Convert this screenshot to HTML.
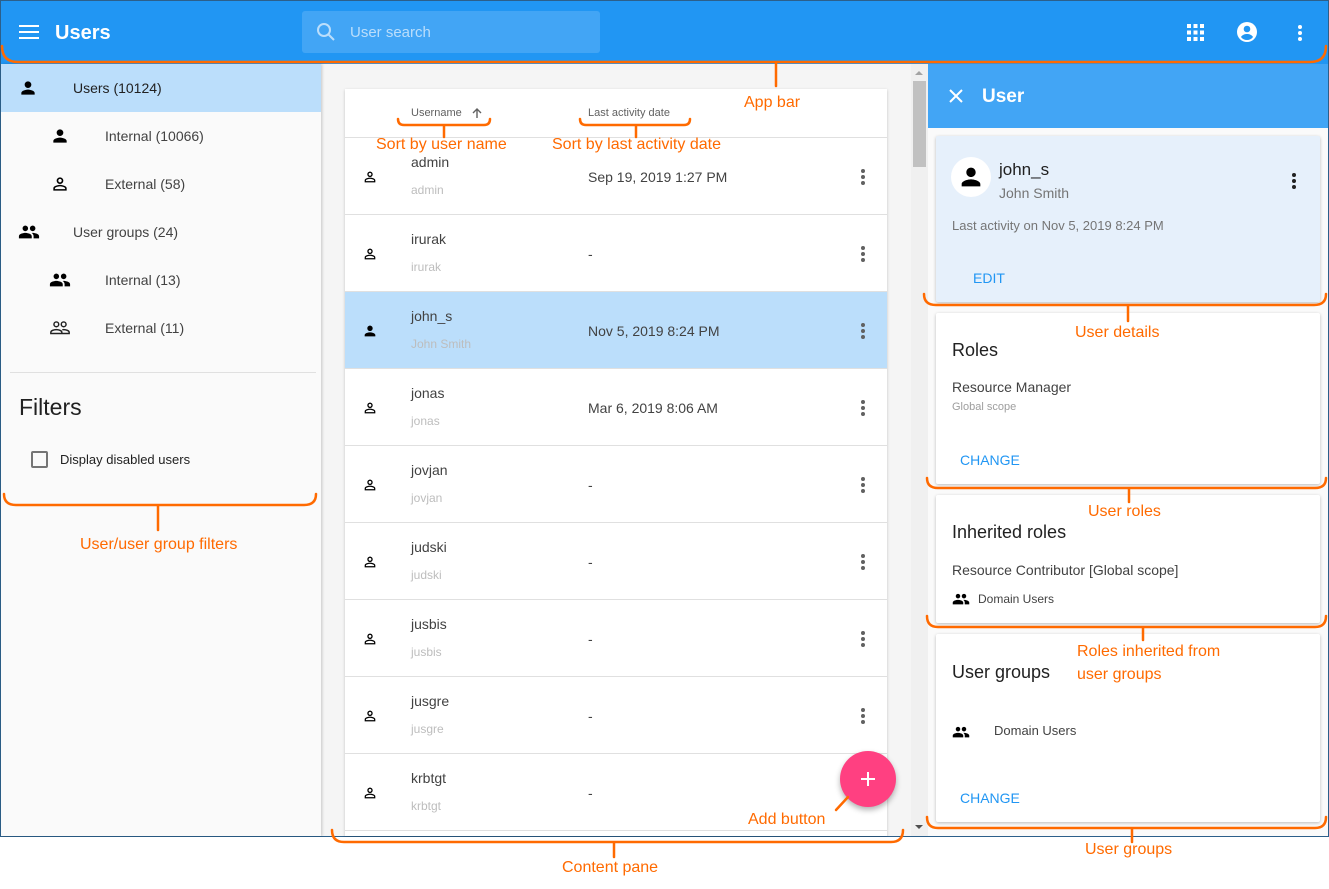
<!DOCTYPE html>
<html><head><meta charset="utf-8">
<style>
*{box-sizing:border-box;margin:0;padding:0}
body{width:1329px;height:889px;background:#fff;position:relative;overflow:hidden;font-family:"Liberation Sans",sans-serif;color:#212121}
.a{position:absolute}
.t{position:absolute;white-space:nowrap;line-height:1}
svg.i{position:absolute}
.ann{position:absolute;white-space:nowrap;color:#ff6a00;font-size:16px;line-height:1;font-family:"Liberation Sans",sans-serif}
.card{position:absolute;left:936px;width:384px;background:#fff;border-radius:2px;box-shadow:0 1px 3px rgba(0,0,0,.25)}
.btn{position:absolute;color:#2196f3;font-size:14px;line-height:1}
</style></head><body>
<!-- frame -->
<div class="a" style="left:0;top:0;width:1329px;height:837px;border:1px solid #2c5f8a;background:#f5f5f5"></div>
<!-- app bar -->
<div class="a" style="left:1px;top:1px;width:1327px;height:63px;background:#2196f3"></div>
<div class="a" style="left:19px;top:25px;width:20px;height:2px;background:#fff;box-shadow:0 6px 0 #fff,0 12px 0 #fff"></div>
<div class="t" style="left:55px;top:23px;color:#fff;font-size:20px;font-weight:bold">Users</div>
<div class="a" style="left:302px;top:11px;width:298px;height:42px;background:#42a5f5;border-radius:3px"></div>
<svg class="i" style="left:314px;top:20px" width="24" height="24" viewBox="0 0 24 24"><circle cx="10" cy="10" r="6" fill="none" stroke="#bbdefb" stroke-width="2"/><path d="M14.5 14.5L20 20" stroke="#bbdefb" stroke-width="2"/></svg>
<div class="t" style="left:350px;top:25px;color:#bbdefb;font-size:15px">User search</div>
<svg class="i" style="left:1187px;top:24px" width="17" height="17" viewBox="0 0 17 17" fill="#fff"><rect x="0" y="0" width="4" height="4"/><rect x="6.5" y="0" width="4" height="4"/><rect x="13" y="0" width="4" height="4"/><rect x="0" y="6.5" width="4" height="4"/><rect x="6.5" y="6.5" width="4" height="4"/><rect x="13" y="6.5" width="4" height="4"/><rect x="0" y="13" width="4" height="4"/><rect x="6.5" y="13" width="4" height="4"/><rect x="13" y="13" width="4" height="4"/></svg>
<svg class="i" style="left:1236px;top:21px" width="22" height="22" viewBox="0 0 22 22"><circle cx="11" cy="11" r="10" fill="#fff"/><circle cx="11" cy="8" r="3.3" fill="#2196f3"/><path d="M5 16c1.5-2.5 4-3 6-3s4.5.5 6 3c-1.5 2-3.5 3-6 3s-4.5-1-6-3z" fill="#2196f3"/></svg>
<div class="a" style="left:1298px;top:25px;width:4px;height:4px;border-radius:2px;background:#fff;box-shadow:0 6px 0 #fff,0 12px 0 #fff"></div>

<!-- left sidebar -->
<div class="a" style="left:1px;top:64px;width:320px;height:772px;background:#fafafa;box-shadow:1px 0 3px rgba(0,0,0,.2)"></div>
<div class="a" style="left:1px;top:64px;width:320px;height:48px;background:#bbdefb"></div>
<svg class="i" style="left:18px;top:78px" width="20" height="20" viewBox="0 0 24 24"><path d="M12 12c2.21 0 4-1.79 4-4s-1.79-4-4-4-4 1.79-4 4 1.79 4 4 4zm0 2c-2.67 0-8 1.34-8 4v2h16v-2c0-2.66-5.33-4-8-4z"/></svg>
<div class="t" style="left:73px;top:81px;font-size:14px">Users (10124)</div>
<svg class="i" style="left:50px;top:126px" width="20" height="20" viewBox="0 0 24 24"><path d="M12 12c2.21 0 4-1.79 4-4s-1.79-4-4-4-4 1.79-4 4 1.79 4 4 4zm0 2c-2.67 0-8 1.34-8 4v2h16v-2c0-2.66-5.33-4-8-4z"/></svg>
<div class="t" style="left:105px;top:129px;font-size:14px;color:#424242">Internal (10066)</div>
<svg class="i" style="left:50px;top:174px" width="20" height="20" viewBox="0 0 24 24"><path d="M12 5.9c1.16 0 2.1.94 2.1 2.1s-.94 2.1-2.1 2.1S9.9 9.16 9.9 8s.94-2.1 2.1-2.1m0 9c2.97 0 6.1 1.46 6.1 2.1v1.1H5.9V17c0-.64 3.13-2.1 6.1-2.1M12 4C9.79 4 8 5.79 8 8s1.79 4 4 4 4-1.79 4-4-1.79-4-4-4zm0 9c-2.67 0-8 1.34-8 4v3h16v-3c0-2.66-5.33-4-8-4z"/></svg>
<div class="t" style="left:105px;top:177px;font-size:14px;color:#424242">External (58)</div>
<svg class="i" style="left:17px;top:221px" width="24" height="22" viewBox="0 0 24 24"><path d="M16 11c1.66 0 2.99-1.34 2.99-3S17.66 5 16 5c-1.66 0-3 1.34-3 3s1.34 3 3 3zm-8 0c1.66 0 2.99-1.34 2.99-3S9.66 5 8 5C6.34 5 5 6.34 5 8s1.34 3 3 3zm0 2c-2.33 0-7 1.170-7 3.5V19h14v-2.5c0-2.330-4.67-3.5-7-3.5zm8 0c-.29 0-.62.02-.97.05 1.16.84 1.970 1.97 1.97 3.45V19h6v-2.5c0-2.33-4.67-3.5-7-3.5z"/></svg>
<div class="t" style="left:73px;top:225px;font-size:14px;color:#424242">User groups (24)</div>
<svg class="i" style="left:49px;top:269px" width="22" height="22" viewBox="0 0 24 24"><path d="M16 11c1.66 0 2.99-1.34 2.99-3S17.66 5 16 5c-1.66 0-3 1.34-3 3s1.34 3 3 3zm-8 0c1.66 0 2.99-1.34 2.99-3S9.660 5 8 5C6.34 5 5 6.34 5 8s1.34 3 3 3zm0 2c-2.33 0-7 1.17-7 3.5V19h14v-2.5c0-2.33-4.67-3.5-7-3.5zm8 0c-.29 0-.62.02-.97.05 1.16.84 1.97 1.97 1.97 3.45V19h6v-2.5c0-2.33-4.67-3.5-7-3.5z"/></svg>
<div class="t" style="left:105px;top:273px;font-size:14px;color:#424242">Internal (13)</div>
<svg class="i" style="left:49px;top:317px" width="22" height="22" viewBox="0 0 24 24" fill="none" stroke="#212121" stroke-width="1.6"><circle cx="8" cy="8" r="2.6"/><circle cx="16" cy="8" r="2.6"/><path d="M2 18v-1.3c0-1.8 3.5-2.9 6-2.9s6 1.1 6 2.9V18zM14.5 14c.5-.1 1-.2 1.5-.2 2.5 0 6 1.1 6 2.9V18h-8"/></svg>
<div class="t" style="left:105px;top:321px;font-size:14px;color:#424242">External (11)</div>
<div class="a" style="left:10px;top:372px;width:306px;height:1px;background:#e0e0e0"></div>
<div class="t" style="left:19px;top:396px;font-size:23px">Filters</div>
<div class="a" style="left:31px;top:451px;width:17px;height:17px;border:2px solid #757575;border-radius:2px"></div>
<div class="t" style="left:60px;top:453px;font-size:13px">Display disabled users</div>

<!-- scrollbar -->
<div class="a" style="left:911px;top:64px;width:17px;height:772px;background:#f0f0f0"></div>
<div class="a" style="left:913px;top:81px;width:13px;height:86px;background:#c1c1c1"></div>
<div class="a" style="left:915px;top:71px;width:0;height:0;border-left:4px solid transparent;border-right:4px solid transparent;border-bottom:4px solid #a3a3a3"></div>
<div class="a" style="left:915px;top:825px;width:0;height:0;border-left:4px solid transparent;border-right:4px solid transparent;border-top:4px solid #505050"></div>

<!-- table -->
<div class="a" style="left:345px;top:89px;width:542px;height:747px;background:#fff;box-shadow:0 1px 3px rgba(0,0,0,.2)"></div>
<div class="t" style="left:411px;top:108px;font-size:11px;color:#616161">Username</div>
<svg class="i" style="left:471px;top:107px" width="12" height="12" viewBox="0 0 12 12"><path d="M6 11V2M2 6l4-4 4 4" stroke="#616161" stroke-width="1.4" fill="none"/></svg>
<div class="t" style="left:588px;top:108px;font-size:11px;color:#616161">Last activity date</div>
<div class="a" style="left:345px;top:137px;width:542px;height:1px;background:#e0e0e0"></div>
<div id="rows"></div>

<!-- FAB -->
<div class="a" style="left:840px;top:751px;width:56px;height:56px;border-radius:28px;background:#ff4081;box-shadow:0 3px 6px rgba(0,0,0,.3)"></div>
<div class="a" style="left:861px;top:778px;width:14px;height:2px;background:#fff"></div>
<div class="a" style="left:867px;top:772px;width:2px;height:14px;background:#fff"></div>

<!-- right panel -->
<div class="a" style="left:928px;top:64px;width:400px;height:772px;background:#fafafa"></div>
<div class="a" style="left:928px;top:64px;width:400px;height:64px;background:#42a5f5"></div>
<svg class="i" style="left:948px;top:88px" width="16" height="16" viewBox="0 0 16 16"><path d="M2 2l12 12M14 2L2 14" stroke="#fff" stroke-width="2"/></svg>
<div class="t" style="left:982px;top:87px;color:#fff;font-size:19px;font-weight:bold">User</div>

<div class="card" style="top:136px;height:166px;background:#e6f0fb"></div>
<div class="a" style="left:951px;top:157px;width:40px;height:40px;border-radius:20px;background:#fff"></div>
<svg class="i" style="left:957px;top:163px" width="28" height="28" viewBox="0 0 24 24"><path d="M12 12c2.21 0 4-1.79 4-4s-1.79-4-4-4-4 1.790-4 4 1.79 4 4 4zm0 2c-2.67 0-8 1.34-8 4v2h16v-2c0-2.66-5.33-4-8-4z"/></svg>
<div class="t" style="left:999px;top:161px;font-size:17px">john_s</div>
<div class="t" style="left:999px;top:186px;font-size:14px;color:#757575">John Smith</div>
<div class="a" style="left:1292px;top:173px;width:4px;height:4px;border-radius:2px;background:#212121;box-shadow:0 6px 0 #212121,0 12px 0 #212121"></div>
<div class="t" style="left:952px;top:219px;font-size:13px;color:#757575">Last activity on Nov 5, 2019 8:24 PM</div>
<div class="btn" style="left:973px;top:271px">EDIT</div>

<div class="card" style="top:313px;height:171px"></div>
<div class="t" style="left:952px;top:341px;font-size:18px">Roles</div>
<div class="t" style="left:952px;top:380px;font-size:14px;color:#424242">Resource Manager</div>
<div class="t" style="left:952px;top:402px;font-size:11px;color:#9e9e9e">Global scope</div>
<div class="btn" style="left:960px;top:453px">CHANGE</div>

<div class="card" style="top:495px;height:128px"></div>
<div class="t" style="left:952px;top:523px;font-size:18px">Inherited roles</div>
<div class="t" style="left:952px;top:563px;font-size:14px;color:#424242">Resource Contributor [Global scope]</div>
<svg class="i" style="left:952px;top:590px" width="18" height="16" viewBox="0 0 24 21"><path d="M16 11c1.66 0 2.99-1.34 2.99-3S17.66 5 16 5c-1.66 0-3 1.34-3 3s1.34 3 3 3zm-8 0c1.66 0 2.99-1.34 2.99-3S9.66 5 8 5C6.34 5 5 6.34 5 8s1.34 3 3 3zm0 2c-2.33 0-7 1.17-7 3.5V19h14v-2.5c0-2.33-4.67-3.5-7-3.5zm8 0c-.29 0-.62.02-.97.05 1.16.84 1.97 1.97 1.97 3.45V19h6v-2.5c0-2.33-4.67-3.5-7-3.5z"/></svg>
<div class="t" style="left:978px;top:593px;font-size:12px;color:#424242">Domain Users</div>

<div class="card" style="top:634px;height:188px"></div>
<div class="t" style="left:952px;top:663px;font-size:18px">User groups</div>
<svg class="i" style="left:952px;top:723px" width="18" height="16" viewBox="0 0 24 21"><path d="M16 11c1.66 0 2.99-1.34 2.99-3S17.66 5 16 5c-1.66 0-3 1.34-3 3s1.34 3 3 3zm-8 0c1.66 0 2.99-1.34 2.99-3S9.66 5 8 5C6.34 5 5 6.34 5 8s1.34 3 3 3zm0 2c-2.33 0-7 1.17-7 3.5V19h14v-2.5c0-2.33-4.67-3.5-7-3.5zm8 0c-.29 0-.62.02-.97.05 1.16.84 1.97 1.97 1.97 3.45V19h6v-2.5c0-2.33-4.67-3.5-7-3.5z"/></svg>
<div class="t" style="left:994px;top:724px;font-size:13px;color:#424242">Domain Users</div>
<div class="btn" style="left:960px;top:791px">CHANGE</div>

<!-- bottom white below frame -->
<div class="a" style="left:0;top:837px;width:1329px;height:52px;background:#fff"></div>

<!-- annotations -->
<svg class="a" style="left:0;top:0" width="1329" height="889" fill="none" stroke="#ff6a00" stroke-width="2.5" stroke-linecap="round">
<path d="M2 46 Q2 62 18 62 L1310 62 Q1326 62 1326 46"/><path d="M776 63 V86"/>
<path d="M398 119 Q398 125 404 125 L484 125 Q490 125 490 119"/><path d="M444 126 V137"/>
<path d="M580 119 Q580 125 586 125 L684 125 Q690 125 690 119"/><path d="M636 126 V137"/>
<path d="M4 494 Q4 505 16 505 L304 505 Q316 505 316 494"/><path d="M158 506 V530"/>
<path d="M924 294 Q924 305 936 305 L1314 305 Q1326 305 1326 294"/><path d="M1128 306 V321"/>
<path d="M927 478 Q927 488 938 488 L1315 488 Q1326 488 1326 478"/><path d="M1129 489 V502"/>
<path d="M927 616 Q927 627 938 627 L1315 627 Q1326 627 1326 616"/><path d="M1143 628 V640"/>
<path d="M927 817 Q927 828 938 828 L1315 828 Q1326 828 1326 817"/><path d="M1132 829 V842"/>
<path d="M332 830 Q332 842 344 842 L891 842 Q903 842 903 830"/><path d="M614 843 V857"/>
<path d="M836 810 L848 797"/>
</svg>
<div class="ann" style="left:744px;top:95px">App bar</div>
<div class="ann" style="left:376px;top:137px">Sort by user name</div>
<div class="ann" style="left:552px;top:137px">Sort by last activity date</div>
<div class="ann" style="left:80px;top:537px">User/user group filters</div>
<div class="ann" style="left:1075px;top:325px">User details</div>
<div class="ann" style="left:1088px;top:504px">User roles</div>
<div class="ann" style="left:1077px;top:644px">Roles inherited from</div>
<div class="ann" style="left:1077px;top:667px">user groups</div>
<div class="ann" style="left:1085px;top:842px">User groups</div>
<div class="ann" style="left:748px;top:812px">Add button</div>
<div class="ann" style="left:562px;top:860px">Content pane</div>

<script>
var d=[["admin","admin","Sep 19, 2019 1:27 PM"],["irurak","irurak","-"],["john_s","John Smith","Nov 5, 2019 8:24 PM"],["jonas","jonas","Mar 6, 2019 8:06 AM"],["jovjan","jovjan","-"],["judski","judski","-"],["jusbis","jusbis","-"],["jusgre","jusgre","-"],["krbtgt","krbtgt","-"]];
var po='<path d="M12 5.9c1.16 0 2.1.94 2.1 2.1s-.94 2.1-2.1 2.1S9.9 9.16 9.9 8s.94-2.1 2.1-2.1m0 9c2.97 0 6.1 1.46 6.1 2.1v1.1H5.9V17c0-.64 3.13-2.1 6.1-2.1M12 4C9.79 4 8 5.79 8 8s1.79 4 4 4 4-1.79 4-4-1.79-4-4-4zm0 9c-2.67 0-8 1.34-8 4v3h16v-3c0-2.66-5.33-4-8-4z"/>';
var pf='<path d="M12 12c2.21 0 4-1.79 4-4s-1.79-4-4-4-4 1.79-4 4 1.79 4 4 4zm0 2c-2.67 0-8 1.34-8 4v2h16v-2c0-2.66-5.33-4-8-4z"/>';
var h='';
d.forEach(function(r,i){var t=138+77*i;var sel=i==2;
h+='<div class="a" style="left:345px;top:'+t+'px;width:542px;height:77px;background:'+(sel?'#bbdefb':'#fff')+';border-bottom:1px solid #e0e0e0"></div>';
h+='<svg class="i" style="left:362px;top:'+(t+31)+'px" width="16" height="16" viewBox="0 0 24 24">'+(sel?pf:po)+'</svg>';
h+='<div class="t" style="left:411px;top:'+(t+17)+'px;font-size:14px;color:#424242">'+r[0]+'</div>';
h+='<div class="t" style="left:411px;top:'+(t+46)+'px;font-size:12px;color:#bdbdbd">'+r[1]+'</div>';
h+='<div class="t" style="left:588px;top:'+(t+32)+'px;font-size:14px;color:#424242">'+r[2]+'</div>';
if(i<8)h+='<div class="a" style="left:861px;top:'+(t+31)+'px;width:4px;height:4px;border-radius:2px;background:#616161;box-shadow:0 6px 0 #616161,0 12px 0 #616161"></div>';
});
document.getElementById('rows').outerHTML=h;
</script>
</body></html>
